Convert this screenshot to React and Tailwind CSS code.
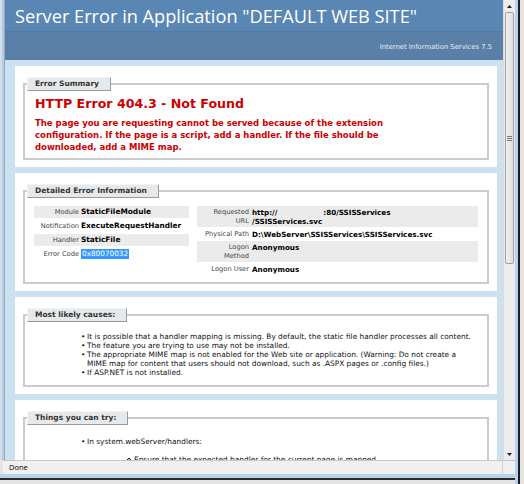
import React from "react"

const verdana = { fontFamily: '"DejaVu Sans", Verdana, sans-serif' }

function Legend({ children }) {
  return (
    <legend className="ml-[2px] h-[14px] pl-[7px] pr-[11px] flex items-center bg-[#E6E9EC] border-t border-l border-t-[#f4f4f4] border-l-[#f4f4f4] border-r border-b border-r-[#9a9a9a] border-b-[#9a9a9a] text-[7.5px] font-bold text-[#333]">
      {children}
    </legend>
  )
}

function Panel({ title, children, className = "" }) {
  return (
    <div className={`bg-white px-[8px] pt-[11px] pb-[7px] ${className}`}>
      <fieldset className="border-2 border-[#cbcbcb]">
        <Legend>{title}</Legend>
        {children}
      </fieldset>
    </div>
  )
}

function Bullet({ children }) {
  return (
    <div className="flex">
      <span className="w-[6px] shrink-0">•</span>
      <span>{children}</span>
    </div>
  )
}

function App() {
  return (
    <div className="w-[524px] h-[484px] flex overflow-hidden bg-[#e4e4e4]" style={verdana}>
      <div className="flex-1 flex flex-col min-w-0">
        <div className="flex-1 flex min-h-0">
          {/* left window frame */}
          <div className="w-[5px] flex shrink-0">
            <div className="w-[2px] bg-[#d6dde5]" />
            <div className="w-[2px] bg-[#b3cbe4]" />
            <div className="w-[1px] bg-[#8fa9c4]" />
          </div>

          {/* page */}
          <div className="flex-1 flex flex-col bg-[#CBE1EF] overflow-hidden">
            <div className="h-[32px] shrink-0 bg-[#5A86B3] flex items-center pl-[10px] pt-[2px] border-b border-[#5279a2]">
              <h1 className="text-white text-[18.2px] leading-none" style={{ fontFamily: '"Open Sans", "DejaVu Sans", sans-serif' }}>
                Server Error in Application "DEFAULT WEB SITE"
              </h1>
            </div>
            <div className="h-[28px] shrink-0 bg-[#5B80A8] flex items-center justify-end pr-[11px] pt-[3px]">
              <span className="text-[#e6edf4] text-[6.8px]">Internet Information Services 7.5</span>
            </div>

            <div className="flex flex-col gap-[6px] pt-[6px] pl-[10px] pr-[6px]">
              {/* Error Summary */}
              <Panel title="Error Summary">
                <div className="px-[10px] pt-[5px] pb-[5px] text-[#CC0000] font-bold">
                  <h2 className="text-[12.6px] leading-[15px]">HTTP Error 404.3 - Not Found</h2>
                  <p className="mt-[6px] text-[8.5px] leading-[12px]">
                    The page you are requesting cannot be served because of the extension
                    <br />
                    configuration. If the page is a script, add a handler. If the file should be
                    <br />
                    downloaded, add a MIME map.
                  </p>
                </div>
              </Panel>

              {/* Detailed Error Information */}
              <Panel title="Detailed Error Information">
                <div className="flex gap-[8px] pl-[9px] pt-[8px] pb-[8px] text-black">
                  <div className="w-[155px] flex flex-col gap-[2px]">
                    {[
                      ["Module", "StaticFileModule", true],
                      ["Notification", "ExecuteRequestHandler", false],
                      ["Handler", "StaticFile", true],
                    ].map(([k, v, shade]) => (
                      <div key={k} className={`h-[12px] flex items-center ${shade ? "bg-[#EBEBEB]" : ""}`}>
                        <span className="w-[45px] text-right text-[6.7px] text-[#444]">{k}</span>
                        <span className="pl-[2px] text-[7.4px] font-bold">{v}</span>
                      </div>
                    ))}
                    <div className="h-[12px] flex items-center">
                      <span className="w-[45px] text-right text-[6.7px] text-[#444]">Error Code</span>
                      <span className="ml-[2px] px-[1px] text-[7.3px] leading-[10px] bg-[#3399FF] text-white">0x80070032</span>
                    </div>
                  </div>

                  <div className="w-[281px] flex flex-col gap-[2px] text-[7.2px] leading-[9px]">
                    <div className="h-[21px] flex bg-[#EBEBEB] pt-[2px]">
                      <span className="w-[52px] text-right text-[6.7px] text-[#444]">
                        Requested
                        <br />
                        URL
                      </span>
                      <span className="pl-[3px] font-bold">
                        http://<span className="inline-block w-[46px]" />:80/SSISServices
                        <br />
                        /SSISServices.svc
                      </span>
                    </div>
                    <div className="h-[10px] flex items-center">
                      <span className="w-[52px] text-right text-[6.7px] text-[#444]">Physical Path</span>
                      <span className="pl-[3px] font-bold">D:\WebServer\SSISServices\SSISServices.svc</span>
                    </div>
                    <div className="h-[21px] flex bg-[#EBEBEB] pt-[2px]">
                      <span className="w-[52px] text-right text-[6.7px] text-[#444]">
                        Logon
                        <br />
                        Method
                      </span>
                      <span className="pl-[3px] font-bold">Anonymous</span>
                    </div>
                    <div className="h-[10px] flex items-center">
                      <span className="w-[52px] text-right text-[6.7px] text-[#444]">Logon User</span>
                      <span className="pl-[3px] font-bold">Anonymous</span>
                    </div>
                  </div>
                </div>
              </Panel>

              {/* Most likely causes */}
              <Panel title="Most likely causes:">
                <div className="pl-[56px] pt-[10px] pb-[8px] text-[7.4px] leading-[9px] text-[#111]">
                  <Bullet>It is possible that a handler mapping is missing. By default, the static file handler processes all content.</Bullet>
                  <Bullet>The feature you are trying to use may not be installed.</Bullet>
                  <Bullet>
                    The appropriate MIME map is not enabled for the Web site or application. (Warning: Do not create a
                    <br />
                    MIME map for content that users should not download, such as .ASPX pages or .config files.)
                  </Bullet>
                  <Bullet>If ASP.NET is not installed.</Bullet>
                </div>
              </Panel>

              {/* Things you can try */}
              <Panel title="Things you can try:">
                <div className="pl-[56px] pt-[12px] pb-[8px] text-[7.4px] leading-[9px] text-[#111]">
                  <Bullet>In system.webServer/handlers:</Bullet>
                  <div className="flex items-center pl-[46px] mt-[9px]">
                    <span className="w-[4px] h-[4px] rounded-full border border-black mr-[3px]" />
                    <span>Ensure that the expected handler for the current page is mapped.</span>
                  </div>
                </div>
              </Panel>
            </div>
          </div>

          {/* scrollbar */}
          <div className="w-[12px] shrink-0 flex flex-col bg-[#ececec] border-l border-[#dcdcdc]">
            <div className="h-[12px] flex items-center justify-center">
              <svg width="5" height="3" viewBox="0 0 5 3"><path d="M0 3 L2.5 0 L5 3 Z" fill="#222" /></svg>
            </div>
            <div className="h-[252px] mx-[1px] rounded-[2px] border border-[#a2a2a2] bg-gradient-to-r from-[#f2f2f2] to-[#dedede] flex items-center justify-center">
              <div className="flex flex-col gap-[1px]">
                <div className="w-[5px] h-[1px] bg-[#777]" />
                <div className="w-[5px] h-[1px] bg-[#777]" />
                <div className="w-[5px] h-[1px] bg-[#777]" />
              </div>
            </div>
            <div className="flex-1" />
            <div className="h-[12px] flex items-center justify-center">
              <svg width="5" height="3" viewBox="0 0 5 3"><path d="M0 0 L2.5 3 L5 0 Z" fill="#222" /></svg>
            </div>
          </div>
        </div>

        {/* status bar */}
        <div className="h-[14px] shrink-0 flex items-center bg-[#F0F0F0] border-t border-[#c8c8c8] ml-[3px]">
          <span className="pl-[6px] text-[7.5px] text-black" style={{ fontFamily: '"Open Sans", sans-serif' }}>Done</span>
          <div className="flex-1" />
          <div className="w-[1px] h-full bg-[#d0d0d0] mr-[12px]" />
        </div>
        <div className="h-[4px] shrink-0 bg-[#b9d2ec]" />
        <div className="h-[2px] shrink-0 bg-[#2a2a2a]" />
        <div className="h-[4px] shrink-0 bg-[#e4e4e4]" />
      </div>

      {/* right window frame */}
      <div className="w-[9px] shrink-0 flex">
        <div className="w-[3px] bg-[#b9d2ec]" />
        <div className="w-[2px] bg-[#1e1e1e]" />
        <div className="w-[4px] bg-[#e4e4e4]" />
      </div>
    </div>
  )
}

export default App
